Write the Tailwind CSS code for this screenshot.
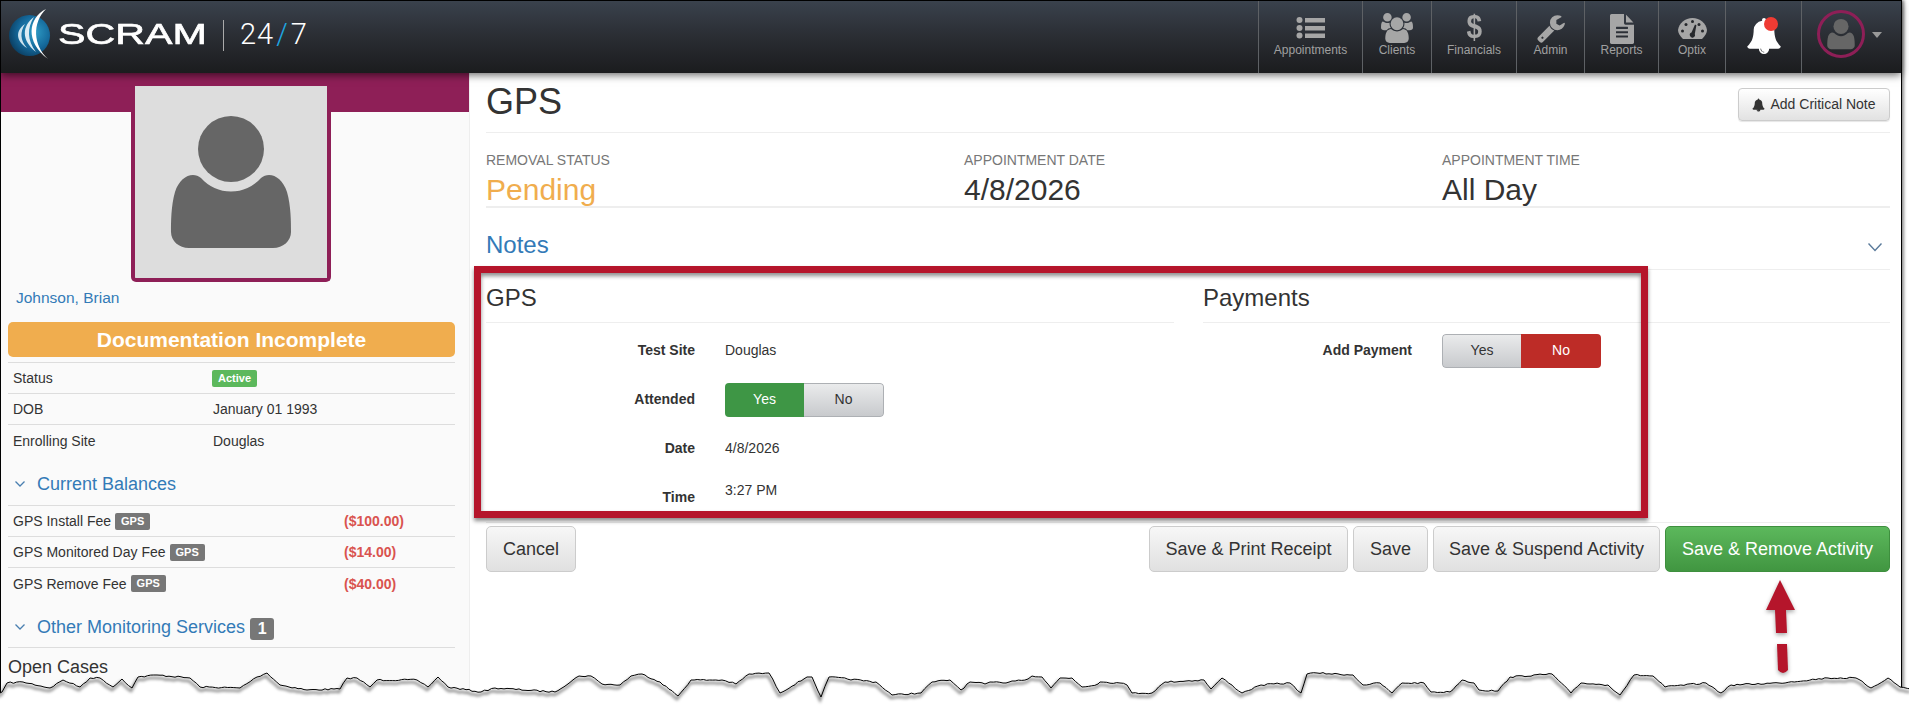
<!DOCTYPE html>
<html>
  <head>
    <meta charset="UTF-8">
    <title>SCRAM 24/7 - GPS</title>
    <script src="https://cdn.jsdelivr.net/npm/@tailwindcss/browser@4"></script>
  </head>
  <body class="bg-white text-[#333] overflow-hidden font-['Liberation_Sans',Arial,sans-serif]">
    <div class="relative w-[1909px] h-[710px] overflow-hidden">
      <!--screenshot frame-->
      <div class="w-[1902px] h-[710px] border-l border-t border-r border-black shadow-[2px_0_3px_rgba(0,0,0,0.45)] flex flex-col bg-white">

        <!--top nav-->
        <header class="relative z-10 h-[72px] shrink-0 flex bg-gradient-to-b from-[#3a424d] via-[#2a2d33] to-[#1b1c1e] shadow-[0_2px_8px_rgba(0,0,0,0.6)]">
          <div class="flex items-start flex-1 relative">
            <svg class="mt-[6px] ml-[7px] shrink-0" width="44" height="56" viewBox="7 7 44 56">
              <defs>
                <radialGradient id="globe" cx="62%" cy="42%" r="65%">
                  <stop offset="0" stop-color="#2f9cc6"/>
                  <stop offset="0.6" stop-color="#14689a"/>
                  <stop offset="1" stop-color="#0b3f63"/>
                </radialGradient>
              </defs>
              <circle cx="28.5" cy="35.5" r="20.5" fill="url(#globe)"/>
              <path d="M45 9C27 18 24 42 47 59C32 45 31 23 45 9Z" fill="#fff"/>
              <path d="M33 17C21 26 20 40 35 52C26 40 26 28 33 17Z" fill="#dcecf4"/>
              <path d="M24 24C14 31 15 41 26 48C19 40 19 32 24 24Z" fill="#cfe4ef"/>
            </svg>
            <div class="w-[149px] ml-[6px] mt-[16px] text-[29px] leading-[34px] text-white [-webkit-text-stroke:0.6px_white] whitespace-nowrap"><span class="inline-block origin-left scale-x-[1.42]">SCRAM</span></div>
            <div class="w-px h-[31px] bg-[#aaa] ml-[16px] mt-[19px]"></div>
            <div class="ml-[16px] mt-[16px] text-[29px] leading-[34px] text-white whitespace-nowrap font-['Roboto',sans-serif] font-light tracking-[1px]">24<span class="text-[#1ea7e0] mx-[2px]">/</span>7</div>
          </div>
          <nav class="flex text-[12px] leading-[14px] text-[#a0a0a0]">
            <a class="w-[104px] border-l border-[#5e6165] flex flex-col items-center">
              <svg class="mt-[15px] h-[24px]" width="30" height="24" viewBox="0 0 30 24" fill="#a6a6a6">
                <circle cx="3.5" cy="4" r="3"/><circle cx="3.5" cy="12" r="3"/><circle cx="3.5" cy="19.5" r="3"/>
                <rect x="9" y="2" width="20" height="4.5"/><rect x="9" y="10" width="20" height="4.5"/><rect x="9" y="17.5" width="20" height="4.5"/>
              </svg>
              <span class="mt-[3px]">Appointments</span>
            </a>
            <a class="w-[69px] border-l border-[#5e6165] flex flex-col items-center">
              <svg class="mt-[12px]" width="32" height="30" viewBox="0 0 1920 1792" fill="#a6a6a6">
                <path d="M593 896q-162 5-265 128h-134q-82 0-138-40.5t-56-118.5q0-353 124-353 6 0 43.5 21t97.5 42.5 119 21.5q67 0 133-23-5 37-5 66 0 139 81 256zm1071 637q0 120-73 189.5t-194 69.5h-874q-121 0-194-69.5t-73-189.5q0-53 3.5-103.5t14-109 26.5-108.5 43-97.5 62-81 85.5-53.5 111.5-20q10 0 43 21.5t73 48 107 48 135 21.5 135-21.5 107-48 73-48 43-21.5q61 0 111.5 20t85.5 53.5 62 81 43 97.5 26.5 108.5 14 109 3.5 103.5zm-1024-1277q0 106-75 181t-181 75-181-75-75-181 75-181 181-75 181 75 75 181zm704 384q0 159-112.5 271.5t-271.5 112.5-271.5-112.5-112.5-271.5 112.5-271.5 271.5-112.5 271.5 112.5 112.5 271.5zm576 225q0 78-56 118.5t-138 40.5h-134q-103-123-265-128 81-117 81-256 0-29-5-66 66 23 133 23 59 0 119-21.5t97.5-42.5 43.5-21q124 0 124 353zm-128-609q0 106-75 181t-181 75-181-75-75-181 75-181 181-75 181 75 75 181z"/>
              </svg>
              <span>Clients</span>
            </a>
            <a class="w-[85px] border-l border-[#5e6165] flex flex-col items-center">
              <span class="mt-[9px] h-[33px] text-[33px] leading-[33px] font-bold text-[#a6a6a6] scale-x-[0.85]">$</span>
              <span>Financials</span>
            </a>
            <a class="w-[68px] border-l border-[#5e6165] flex flex-col items-center">
              <svg class="mt-[12px]" width="30" height="30" viewBox="0 0 1792 1792" fill="#a6a6a6">
                <path d="M448 1472q0-26-19-45t-45-19-45 19-19 45 19 45 45 19 45-19 19-45zm644-420l-682 682q-37 37-90 37-52 0-91-37l-106-108q-38-36-38-90 0-53 38-91l681-681q39 98 114.5 173.5t173.5 114.5zm634-435q0 39-23 106-47 134-164.5 217.5t-258.5 83.5q-185 0-316.5-131.5t-131.5-316.5 131.5-316.5 316.5-131.5q58 0 121.5 16.5t107.5 46.5q16 11 16 28t-16 28l-293 169v224l193 107q5-3 79-48.5t135.5-81 70.5-35.5q15 0 23.5 10t8.5 25z"/>
              </svg>
              <span>Admin</span>
            </a>
            <a class="w-[74px] border-l border-[#5e6165] flex flex-col items-center">
              <svg class="mt-[13px]" width="28" height="30" viewBox="0 0 1792 1792" preserveAspectRatio="none" fill="#a6a6a6">
                <path d="M1596 476q14 14 28 36h-472v-472q22 14 36 28zm-476 164h544v1056q0 40-28 68t-68 28h-1344q-40 0-68-28t-28-68v-1600q0-40 28-68t68-28h800v544q0 40 28 68t68 28zm160 736v-64q0-14-9-23t-23-9h-704q-14 0-23 9t-9 23v64q0 14 9 23t23 9h704q14 0 23-9t9-23zm0-256v-64q0-14-9-23t-23-9h-704q-14 0-23 9t-9 23v64q0 14 9 23t23 9h704q14 0 23-9t9-23zm0-256v-64q0-14-9-23t-23-9h-704q-14 0-23 9t-9 23v64q0 14 9 23t23 9h704q14 0 23-9t9-23z"/>
              </svg>
              <span class="-mt-px">Reports</span>
            </a>
            <a class="w-[67px] border-l border-[#5e6165] flex flex-col items-center">
              <svg class="mt-[17px]" width="29" height="22" viewBox="0 0 29 22">
                <path d="M5 21C2 18 0 15 0 12C1 5 7 0 14.5 0C22 0 28 5 29 12C29 15 27 18 24 21Z" fill="#a6a6a6"/>
                <g fill="#26282c">
                  <circle cx="4.5" cy="13" r="1.5"/><circle cx="8" cy="6.5" r="1.5"/><circle cx="14.5" cy="3.5" r="1.5"/><circle cx="21" cy="6.5" r="1.5"/><circle cx="24.5" cy="13" r="1.5"/>
                  <path d="M17 6.5L18.4 7.2L16.8 16A2.6 2.6 0 1 1 13.5 14.5Z"/>
                </g>
              </svg>
              <span class="mt-[3px]">Optix</span>
            </a>
            <a class="w-[76px] border-l border-[#5e6165] relative flex justify-center">
              <svg class="mt-[17px]" width="36" height="36" viewBox="0 0 1792 1792" fill="#fff">
                <path d="M912 1696q0-16-16-16-59 0-101.5-42.5t-42.5-101.5q0-16-16-16t-16 16q0 73 51.5 124.5t124.5 51.5q16 0 16-16zm816-288q0 52-38 90t-90 38h-448q0 106-75 181t-181 75-181-75-75-181h-448q-52 0-90-38t-38-90q50-42 91-88t85-119.5 74.5-158.5 50-206 19.5-260q0-152 117-282.5t307-158.5q-8-19-8-39 0-40 28-68t68-28 68 28 28 68q0 20-8 39 190 28 307 158.5t117 282.5q0 139 19.5 260t50 206 74.5 158.5 85 119.5 91 88z"/>
              </svg>
              <span class="absolute left-[38px] top-[16px] w-[14px] h-[14px] rounded-full bg-[#ef3b33]"></span>
            </a>
            <a class="w-[100px] border-l border-[#5e6165] flex items-start">
              <div class="ml-[15px] mt-[9px] w-[48px] h-[48px] rounded-full border-[3px] border-[#8e1f57] flex items-center justify-center overflow-hidden">
                <svg class="shrink-0" width="44" height="44" viewBox="0 0 192 192" fill="#666">
                  <circle cx="96" cy="63" r="33"/>
                  <path d="M66 92A40 40 0 0 0 126 92C134 85 147 90 152 106C156 120 156 136 156 146C156 155 148 162 138 162H54C44 162 36 155 36 146C36 136 36 120 40 106C45 90 58 85 66 92Z"/>
                </svg>
              </div>
              <div class="ml-[7px] mt-[31px] w-0 h-0 border-x-[5.5px] border-x-transparent border-t-[6px] border-t-[#999]"></div>
            </a>
          </nav>
        </header>

        <div class="flex flex-1 min-h-0">
          <!--client sidebar-->
          <aside class="w-[469px] shrink-0 bg-[#fafafa] border-r border-[#eee] text-[14px] leading-5">
            <div class="h-[39px] bg-[#8e1f57]"></div>
            <div class="relative ml-[130px] -mt-[26px] w-[200px] h-[196px] border-x-4 border-b-4 border-[#8e1f57] rounded-b-[5px] bg-[#ddd]">
              <svg width="192" height="192" viewBox="0 0 192 192" fill="#666">
                <circle cx="96" cy="63" r="33"/>
                <path d="M66 92A40 40 0 0 0 126 92C134 85 147 90 152 106C156 120 156 136 156 146C156 155 148 162 138 162H54C44 162 36 155 36 146C36 136 36 120 40 106C45 90 58 85 66 92Z"/>
              </svg>
            </div>
            <div class="pl-[7px] pr-[14px]">
              <a class="block mt-[6px] ml-[8px] text-[15.5px] text-[#337ab7]">Johnson, Brian</a>
              <div class="mt-[14px] h-[35px] rounded-[5px] bg-[#f0ad4e] text-white text-[21px] font-bold flex items-center justify-center">Documentation Incomplete</div>

              <div class="mt-[5px] border-t border-[#ddd]">
                <div class="h-[31px] border-b border-[#ddd] flex items-center pl-[5px]"><span class="w-[199px]">Status</span><span class="h-[17px] px-[6px] rounded-[2px] bg-[#5cb85c] text-white text-[11px] leading-[17px] font-bold">Active</span></div>
                <div class="h-[31px] border-b border-[#ddd] flex items-center pl-[5px]"><span class="w-[200px]">DOB</span><span>January 01 1993</span></div>
                <div class="h-[31px] flex items-center pl-[5px]"><span class="w-[200px]">Enrolling Site</span><span>Douglas</span></div>
              </div>

              <div class="h-[50px] pt-[16px] border-b border-[#ddd] flex items-start text-[#337ab7] text-[18px] leading-6">
                <svg class="mt-[9px] ml-[7px] mr-[12px]" width="10" height="6" viewBox="0 0 10 6" fill="none" stroke="#4a7fb0" stroke-width="1.3"><path d="M0.5 0.5L5 5L9.5 0.5"/></svg>
                <span>Current Balances</span>
              </div>
              <div>
                <div class="h-[31px] border-b border-[#ddd] flex items-center pl-[5px]"><span class="w-[331px] flex items-center">GPS Install Fee<span class="ml-[4px] h-[17px] px-[6px] rounded-[2px] bg-[#777] text-white text-[11px] leading-[17px] font-bold">GPS</span></span><span class="font-bold text-[#d9534f]">($100.00)</span></div>
                <div class="h-[31px] border-b border-[#ddd] flex items-center pl-[5px]"><span class="w-[331px] flex items-center">GPS Monitored Day Fee<span class="ml-[4px] h-[17px] px-[6px] rounded-[2px] bg-[#777] text-white text-[11px] leading-[17px] font-bold">GPS</span></span><span class="font-bold text-[#d9534f]">($14.00)</span></div>
                <div class="h-[31px] flex items-center pl-[5px]"><span class="w-[331px] flex items-center">GPS Remove Fee<span class="ml-[4px] h-[17px] px-[6px] rounded-[2px] bg-[#777] text-white text-[11px] leading-[17px] font-bold">GPS</span></span><span class="font-bold text-[#d9534f]">($40.00)</span></div>
              </div>

              <div class="h-[49px] pt-[16px] border-b border-[#ddd] flex items-start text-[#337ab7] text-[18px] leading-6">
                <svg class="mt-[9px] ml-[7px] mr-[12px]" width="10" height="6" viewBox="0 0 10 6" fill="none" stroke="#4a7fb0" stroke-width="1.3"><path d="M0.5 0.5L5 5L9.5 0.5"/></svg>
                <span>Other Monitoring Services</span>
                <span class="ml-[5px] mt-[3px] w-[24px] h-[22px] rounded-[3px] bg-[#777] text-white text-[16px] leading-[22px] font-bold text-center">1</span>
              </div>
              <h4 class="mt-[7px] text-[18px] leading-6">Open Cases</h4>
            </div>
          </aside>

          <!--activity form-->
          <main class="flex-1 min-w-0 pl-[16px] pr-[11px]">
            <div class="h-[60px] border-b border-[#eee] flex justify-between items-start">
              <h1 class="mt-[9px] text-[36px] leading-[40px]">GPS</h1>
              <button class="mt-[15px] w-[152px] h-[33px] rounded border border-[#ccc] bg-gradient-to-b from-white to-[#e2e2e2] shadow-[0_1px_1px_rgba(0,0,0,0.1)] text-[14px] flex items-center justify-center gap-[5px]">
                <svg width="13" height="14" viewBox="0 0 1792 1792" fill="#333"><path d="M912 1696q0-16-16-16-59 0-101.5-42.5t-42.5-101.5q0-16-16-16t-16 16q0 73 51.5 124.5t124.5 51.5q16 0 16-16zm816-288q0 52-38 90t-90 38h-448q0 106-75 181t-181 75-181-75-75-181h-448q-52 0-90-38t-38-90q50-42 91-88t85-119.5 74.5-158.5 50-206 19.5-260q0-152 117-282.5t307-158.5q-8-19-8-39 0-40 28-68t68-28 68 28 28 68q0 20-8 39 190 28 307 158.5t117 282.5q0 139 19.5 260t50 206 74.5 158.5 85 119.5 91 88z"/></svg>
                Add Critical Note
              </button>
            </div>

            <div class="h-[75px] border-b-2 border-[#eee] grid grid-cols-[478px_478px_1fr] pt-[17px]">
              <div><div class="text-[14px] leading-5 text-[#777] uppercase">Removal Status</div><div class="mt-[3px] text-[30px] leading-[34px] text-[#f0ad4e]">Pending</div></div>
              <div><div class="text-[14px] leading-5 text-[#777] uppercase">Appointment Date</div><div class="mt-[3px] text-[30px] leading-[34px]">4/8/2026</div></div>
              <div><div class="text-[14px] leading-5 text-[#777] uppercase">Appointment Time</div><div class="mt-[3px] text-[30px] leading-[34px]">All Day</div></div>
            </div>

            <div class="h-[62px] border-b border-[#eee] pt-[25px] flex justify-between text-[#337ab7]">
              <span class="text-[24px] leading-6">Notes</span>
              <svg class="mt-[9px] mr-[8px]" width="14" height="10" viewBox="0 0 14 10" fill="none" stroke="#5a7a9a" stroke-width="1.4"><path d="M0.5 1.5L7 8.5L13.5 1.5"/></svg>
            </div>

            <div class="grid grid-cols-[688px_687px] gap-x-[29px] text-[14px]">
              <section>
                <h3 class="h-[53px] pt-[14px] border-b border-[#eee] text-[24px] leading-7">GPS</h3>
                <div class="pt-[3px] h-[199px]">
                  <div class="h-[49px] flex items-center"><label class="w-[209px] text-right font-bold">Test Site</label><span class="ml-[30px]">Douglas</span></div>
                  <div class="h-[49px] flex items-center">
                    <label class="w-[209px] text-right font-bold">Attended</label>
                    <div class="ml-[30px] flex w-[159px] h-[34px] rounded overflow-hidden">
                      <span class="w-[79px] bg-[#3e9645] text-white flex items-center justify-center">Yes</span>
                      <span class="flex-1 border border-l-0 border-[#adb0b4] rounded-r bg-gradient-to-b from-[#eaebec] to-[#c8cacd] flex items-center justify-center">No</span>
                    </div>
                  </div>
                  <div class="h-[49px] flex items-center"><label class="w-[209px] text-right font-bold">Date</label><span class="ml-[30px]">4/8/2026</span></div>
                  <div class="h-[49px] flex items-center"><label class="w-[209px] text-right font-bold">Time</label><span class="ml-[30px] pb-[14px]">3:27 PM</span></div>
                </div>
              </section>
              <section>
                <h3 class="h-[53px] pt-[14px] border-b border-[#eee] text-[24px] leading-7">Payments</h3>
                <div class="pt-[3px]">
                  <div class="h-[49px] flex items-center">
                    <label class="w-[209px] text-right font-bold">Add Payment</label>
                    <div class="ml-[30px] flex w-[159px] h-[34px] rounded overflow-hidden">
                      <span class="w-[79px] border border-r-0 border-[#adb0b4] rounded-l bg-gradient-to-b from-[#eaebec] to-[#c8cacd] flex items-center justify-center">Yes</span>
                      <span class="flex-1 bg-[#bd2c27] text-white flex items-center justify-center">No</span>
                    </div>
                  </div>
                </div>
              </section>
            </div>

            <div class="border-t border-[#eee] pt-[3px] flex justify-between text-[18px]">
              <button class="w-[90px] h-[46px] rounded-[5px] border border-[#ccc] bg-gradient-to-b from-[#f7f7f7] to-[#e0e0e0]">Cancel</button>
              <div class="flex gap-[5px]">
                <button class="w-[199px] h-[46px] rounded-[5px] border border-[#ccc] bg-gradient-to-b from-[#f7f7f7] to-[#e0e0e0]">Save &amp; Print Receipt</button>
                <button class="w-[75px] h-[46px] rounded-[5px] border border-[#ccc] bg-gradient-to-b from-[#f7f7f7] to-[#e0e0e0]">Save</button>
                <button class="w-[227px] h-[46px] rounded-[5px] border border-[#ccc] bg-gradient-to-b from-[#f7f7f7] to-[#e0e0e0]">Save &amp; Suspend Activity</button>
                <button class="w-[225px] h-[46px] rounded-[5px] border border-[#3e8f3e] bg-gradient-to-b from-[#5cb85c] to-[#419641] text-white">Save &amp; Remove Activity</button>
              </div>
            </div>
          </main>
        </div>
      </div>

      <!--callout box drawn over the screenshot-->
      <div class="absolute left-[474px] top-[266px] w-[1174px] h-[252px] border-[7px] border-[#b5152b] shadow-[0_3px_4px_rgba(0,0,0,0.45),inset_0_3px_4px_rgba(0,0,0,0.45)]"></div>

      <!--torn edge and arrow-->
      <svg class="absolute left-0 top-0" width="1909" height="710" viewBox="0 0 1909 710">
        <path id="tornFill" fill="#fff"/>
        <path id="tornShadow" class="blur-[1.5px]" fill="none" stroke="#000" stroke-width="2.5" stroke-opacity="0.45" transform="translate(-1 3)"/>
        <path id="tornLine" fill="none" stroke="#000" stroke-width="1"/>
        <g fill="#b5152b" class="drop-shadow-[0_2px_2px_rgba(0,0,0,0.35)]">
          <path d="M1780 580L1795 610H1786L1787 633H1776L1775 610H1766Z"/>
          <path d="M1777 644H1787L1788 670Q1783 676 1778 670Z"/>
        </g>
      </svg>
    </div>
    <script>
      const TORN = [[-2,694],[2,692],[7,683],[23,682],[50,688],[63,680],[80,687],[90,678],[100,678],[113,687],[122,679],[132,688],[138,677],[157,675],[190,678],[200,687],[240,688],[257,677],[267,673],[280,685],[307,690],[340,689],[347,678],[357,678],[370,687],[377,680],[417,680],[428,687],[438,677],[448,687],[481,692],[495,688],[555,692],[579,676],[591,676],[602,684],[620,685],[631,676],[642,674],[660,682],[678,696],[691,680],[722,680],[736,684],[749,674],[769,673],[780,693],[807,677],[812,677],[821,697],[829,677],[876,682],[892,695],[921,693],[932,682],[950,680],[961,690],[970,682],[985,684],[990,682],[1003,683],[1012,681],[1028,679],[1032,676],[1042,677],[1051,688],[1060,678],[1072,678],[1082,687],[1098,684],[1100,682],[1120,683],[1127,685],[1132,693],[1152,693],[1165,682],[1204,680],[1211,689],[1222,678],[1242,693],[1261,685],[1290,683],[1301,693],[1307,674],[1317,673],[1353,675],[1363,685],[1380,683],[1392,693],[1402,683],[1424,683],[1431,692],[1450,692],[1462,680],[1474,683],[1479,690],[1498,691],[1510,677],[1552,674],[1571,693],[1581,683],[1608,685],[1620,695],[1634,675],[1653,676],[1665,687],[1706,683],[1721,693],[1731,685],[1779,683],[1828,678],[1856,678],[1871,688],[1888,678],[1900,687],[1911,689]];

      // small fixed wobble so the tear looks rough
      let seed = 7;
      function wobble() {
        seed = (seed * 16807) % 2147483647;
        return (seed / 2147483647 - 0.5) * 1.6;
      }

      let d = '';
      TORN.forEach(([x, y], i) => {
        if (i > 0) {
          const [px, py] = TORN[i - 1];
          const steps = Math.floor((x - px) / 3);
          for (let s = 1; s < steps; s++) {
            d += `L${(px + (x - px) * s / steps).toFixed(1)} ${(py + (y - py) * s / steps + wobble()).toFixed(1)}`;
          }
        }
        d += `${i ? 'L' : 'M'}${x} ${y}`;
      });

      document.getElementById('tornLine').setAttribute('d', d);
      document.getElementById('tornShadow').setAttribute('d', d);
      document.getElementById('tornFill').setAttribute('d', d + 'V712H-2Z');
    </script>
  </body>
</html>
